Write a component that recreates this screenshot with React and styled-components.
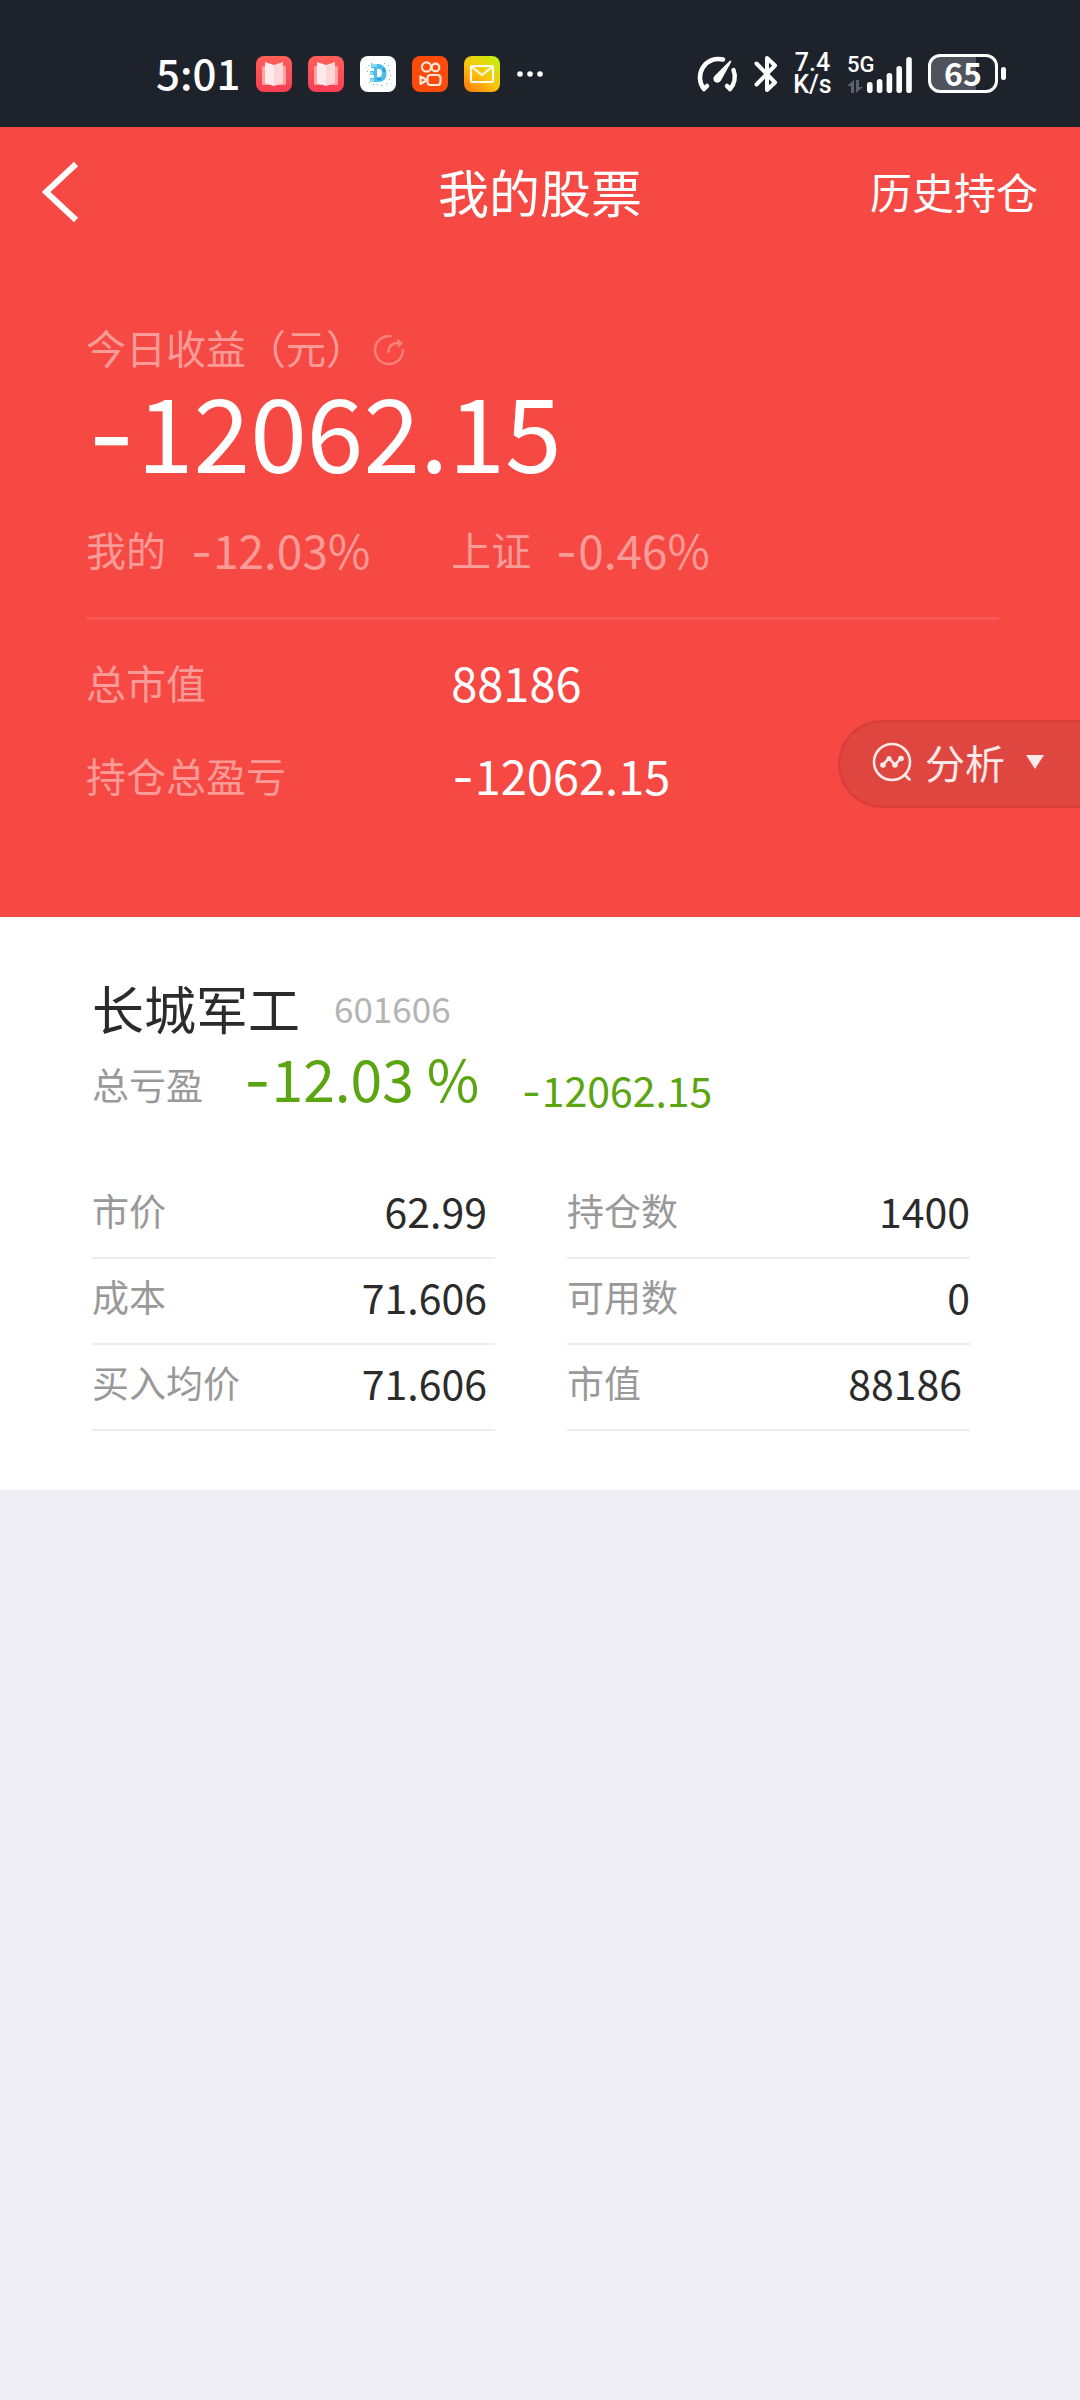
import React from "react";
import styled, { createGlobalStyle } from "styled-components";

const GlobalStyle = createGlobalStyle`
  *, *::before, *::after { box-sizing: border-box; }
  body {
    margin: 0;
    background: #efeef4;
    color: #2b2b2b;
    font-family: "Noto Sans CJK SC", "Noto Sans", sans-serif;
  }
  h1, h2, p, dl, dd { margin: 0; font-weight: 400; }
  svg { display: block; flex: none; }
`;

/* ---------- status bar ---------- */

const StatusBar = styled.header`
  display: flex;
  align-items: center;
  justify-content: space-between;
  height: 127px;
  padding: 20px 74px 0 156px;
  background: #1e222b;
  color: #fff;
`;

const StatusGroup = styled.div`
  display: flex;
  align-items: center;
  gap: ${(p) => p.$gap}px;
`;

const Clock = styled.time`
  padding-bottom: 4px;
  font-size: 42px;
  line-height: 48px;
  font-weight: 500;
`;

const NetSpeed = styled.div`
  display: flex;
  flex-direction: column;
  align-items: center;
  width: 37px;
  font-family: Roboto, sans-serif;
  font-size: 25px;
  line-height: 22px;
  font-weight: 500;
  white-space: nowrap;
`;

const Signal = styled.div`
  display: flex;
  align-items: flex-end;
`;

const SignalType = styled.div`
  display: flex;
  flex-direction: column;
  width: 20px;
  gap: 4px;
  font-family: Roboto, sans-serif;
  font-size: 22px;
  line-height: 22px;
  font-weight: 500;
`;

const Battery = styled.div`
  display: flex;
  align-items: center;
  gap: 3px;

  &::after {
    content: "";
    width: 5px;
    height: 13px;
    border-radius: 3px;
    background: #fff;
  }
`;

const BatteryBody = styled.div`
  width: 70px;
  height: 39px;
  border: 3px solid #fff;
  border-radius: 12px;
  background: linear-gradient(to right, #50535b 70%, transparent 70%);
  font-size: 32px;
  line-height: 30px;
  font-weight: 700;
  text-align: center;
`;

/* ---------- hero ---------- */

const Hero = styled.section`
  position: relative;
  background: #f64944;
  color: #fff;
`;

const Nav = styled.nav`
  display: grid;
  grid-template-columns: 1fr auto 1fr;
  align-items: center;
  height: 128px;
  padding: 0 42px;
`;

const BackButton = styled.button`
  justify-self: start;
  padding: 2px 0 0;
  border: 0;
  background: none;
  color: inherit;
  cursor: pointer;
`;

const Title = styled.h1`
  font-size: 51px;
  line-height: 64px;
`;

const NavLink = styled.a`
  justify-self: end;
  font-size: 42px;
  line-height: 60px;
  color: inherit;
  text-decoration: none;
`;

const Summary = styled.div`
  padding: 62px 81px 112px 86px;
`;

const SoftLabel = styled.span`
  font-size: 40px;
  line-height: 60px;
  color: #fb9b98;
`;

const TodayLabel = styled.div`
  display: flex;
  align-items: center;
  gap: 7px;
`;

const RefreshButton = styled.button`
  padding: 6px 0 0;
  border: 0;
  background: none;
  color: #fa807c;
  cursor: pointer;
`;

const TodayValue = styled.p`
  font-size: 102px;
  line-height: 104px;
`;

/* The short line-height keeps the sign from growing the line it sits on. */
const SignBox = styled.span`
  display: inline-block;
  width: 0.5em;
  font-family: Inter, sans-serif;
  line-height: 0.5;
  text-align: center;
`;

const RateRow = styled.div`
  display: grid;
  grid-template-columns: 40% 1fr;
  margin-top: 38px;
  padding-bottom: 38px;
  border-bottom: 3px solid #f85954;
`;

const Rate = styled.div`
  display: flex;
  align-items: center;
  gap: 24px;
`;

const RateValue = styled.span`
  font-size: 46px;
  line-height: 60px;
  color: #fb9b98;
`;

const TotalList = styled.dl`
  display: grid;
  grid-template-columns: 40% 1fr;
  align-items: center;
  row-gap: 33px;
  padding-top: 32px;
`;

const TotalTerm = styled.dt`
  font-size: 40px;
  line-height: 60px;
  color: #fb9b98;
`;

const TotalValue = styled.dd`
  font-size: 47px;
  line-height: 60px;
`;

/* Floating tab that hangs from the right edge of the hero. */
const AnalysisButton = styled.button`
  position: absolute;
  right: 0;
  bottom: 109px;
  display: flex;
  align-items: center;
  gap: 13px;
  height: 88px;
  padding: 0 36px 4px 32px;
  border: 2px solid #d93d39;
  border-right: 0;
  border-radius: 44px 0 0 44px;
  background: #de463f;
  color: #ffe9e8;
  font-family: inherit;
  font-size: 40px;
  line-height: 60px;
  cursor: pointer;
`;

const Caret = styled.span`
  width: 18px;
  height: 14px;
  margin-left: 8px;
  background: currentColor;
  clip-path: polygon(0 0, 100% 0, 50% 100%);
`;

/* ---------- holding card ---------- */

const Card = styled.section`
  padding: 59px 110px 59px 92px;
  background: #fff;
`;

const StockHeading = styled.div`
  display: flex;
  align-items: center;
  gap: 34px;
`;

const StockName = styled.h2`
  font-size: 52px;
  line-height: 64px;
`;

const StockCode = styled.span`
  font-size: 35px;
  line-height: 64px;
  color: #b4b4b4;
`;

const ProfitRow = styled.div`
  display: flex;
  align-items: flex-end;
`;

const ProfitLabel = styled.span`
  margin-right: 40px;
  font-size: 37px;
  line-height: 60px;
  color: #999;
`;

const ProfitRate = styled.span`
  margin-right: 42px;
  font-size: 57px;
  line-height: 74px;
  color: #5aa510;
`;

const ProfitAmount = styled.span`
  font-size: 41px;
  line-height: 50px;
  color: #5aa510;
`;

const Details = styled.dl`
  display: grid;
  grid-template-columns: 1fr 1fr;
  column-gap: 72px;
  margin-top: 59px;
`;

const DetailRow = styled.div`
  display: flex;
  align-items: center;
  justify-content: space-between;
  height: 86px;
  padding: 0 ${(p) => p.$inset}px 10px 0;
  border-bottom: 2px solid #ededed;
`;

const DetailTerm = styled.dt`
  font-size: 37px;
  line-height: 60px;
  color: #999;
`;

const DetailValue = styled.dd`
  font-size: 41px;
  line-height: 60px;
`;

/* ---------- icons ---------- */

function BookIcon({ id }) {
  return (
    <svg width="36" height="36" viewBox="0 0 36 36" aria-hidden="true">
      <defs>
        <linearGradient id={id} x1="0" y1="0" x2="0" y2="1">
          <stop offset="0" stopColor="#ff6059" />
          <stop offset="1" stopColor="#f83e55" />
        </linearGradient>
      </defs>
      <rect width="36" height="36" rx="8" fill={`url(#${id})`} />
      <rect x="6" y="10" width="24" height="19" rx="1.5" fill="#ffa3a3" />
      <path d="M9 6l9 3v21l-9-3z" fill="#ffe9ea" />
      <path d="M27 6l-9 3v21l9-3z" fill="#ffd6d8" />
    </svg>
  );
}

function PixelDIcon() {
  const dots = [
    [8, 9], [9, 26], [13, 28], [28, 9], [29, 14], [30, 19], [29, 23], [26, 27], [17, 28], [24, 7], [7, 15], [21, 29], [11, 7],
  ];
  return (
    <svg width="36" height="36" viewBox="0 0 36 36" aria-hidden="true">
      <rect width="36" height="36" rx="8" fill="#fff" />
      <path
        fillRule="evenodd"
        d="M11 8h8c5 1 7.500 5 7.500 9.500S24 26 19 26h-9v-4h4v-3h-4v-4h4v-3h-3zM17 13v8h2c2 0 3-2 3-4s-1-4-3-4z"
        fill="#4bbde9"
      />
      <path d="M11 8h6v3h-6zM10 16h3v3h-3zM10 23h4v3h-4z" fill="#8adaf4" />
      <path d="M23 12h2v4h-2zM17 22h4v2h-4z" fill="#269fd9" />
      {dots.map(([x, y]) => (
        <rect key={`${x}-${y}`} x={x} y={y} width="1" height="1" fill="#58b9e2" />
      ))}
    </svg>
  );
}

function CameraIcon() {
  return (
    <svg width="36" height="36" viewBox="0 0 36 36" aria-hidden="true">
      <rect width="36" height="36" rx="8" fill="#fc4b0a" />
      <g fill="none" stroke="#ffe6d8" strokeWidth="2.2" strokeLinejoin="round">
        <circle cx="14.5" cy="11" r="4.6" />
        <circle cx="23.5" cy="11.5" r="3.8" />
        <rect x="15.5" y="19" width="13" height="10" rx="3" />
        <path d="M15 24l-6.500-3.500v7.500z" />
      </g>
    </svg>
  );
}

function MailIcon() {
  return (
    <svg width="36" height="36" viewBox="0 0 36 36" aria-hidden="true">
      <defs>
        <linearGradient id="mail-bg" x1="0.1" y1="1" x2="0.9" y2="0">
          <stop offset="0" stopColor="#ff7a10" />
          <stop offset="0.45" stopColor="#fdc20a" />
          <stop offset="1" stopColor="#c4f214" />
        </linearGradient>
      </defs>
      <rect width="36" height="36" rx="8" fill="url(#mail-bg)" />
      <g fill="none" stroke="#fffbe8" strokeWidth="2.2" strokeLinejoin="round">
        <rect x="7" y="10" width="22" height="16" rx="1" />
        <path d="M8 11l10 8 10-8" />
      </g>
    </svg>
  );
}

function DotsIcon() {
  return (
    <svg width="28" height="36" viewBox="0 0 28 36" fill="#fff" aria-hidden="true">
      <circle cx="4" cy="18" r="2.8" />
      <circle cx="14" cy="18" r="2.8" />
      <circle cx="24" cy="18" r="2.8" />
    </svg>
  );
}

function GaugeIcon() {
  return (
    <svg width="42" height="38" viewBox="0 0 42 38" aria-hidden="true">
      <g fill="none" stroke="#fff" strokeWidth="4.500" strokeLinecap="round" strokeLinejoin="round">
        <path d="M27 4.500A18.500 18.500 0 0 0 8 34l3-3" />
        <path d="M37.500 15A18.500 18.500 0 0 1 34 34l-3-3" />
      </g>
      <path d="M35.500 6.500L25 25.500a4 4 0 1 1-6.500-4.500L34 5.500z" fill="#fff" />
    </svg>
  );
}

function BluetoothIcon() {
  return (
    <svg width="24" height="38" viewBox="0 0 24 38" aria-hidden="true">
      <path
        d="M2.500 8.500L21 27.500 13 35V3l8 7.500L2.500 29.500"
        fill="none"
        stroke="#fff"
        strokeWidth="4"
        strokeLinecap="round"
        strokeLinejoin="round"
      />
    </svg>
  );
}

function DataArrowsIcon() {
  return (
    <svg width="16" height="13" viewBox="0 0 16 13" fill="#5d6068" aria-hidden="true">
      <path d="M7 0v13H4V6H0zM9 13V0h3v7h4z" />
    </svg>
  );
}

function SignalBarsIcon() {
  const heights = [11, 14, 20, 27, 36];
  return (
    <svg width="45" height="36" viewBox="0 0 45 36" fill="#fff" aria-hidden="true">
      {heights.map((h, i) => (
        <rect key={h} x={i * 9.8} y={36 - h} width="5.6" height={h} rx="2.8" />
      ))}
    </svg>
  );
}

function ChevronLeftIcon() {
  return (
    <svg width="38" height="60" viewBox="0 0 38 60" aria-hidden="true">
      <path d="M34 2L4 30l30 28" fill="none" stroke="#fff" strokeWidth="6" />
    </svg>
  );
}

function RefreshIcon() {
  return (
    <svg width="32" height="32" viewBox="0 0 32 32" aria-hidden="true">
      <g fill="none" stroke="currentColor" strokeWidth="2.4" strokeLinecap="round">
        <path d="M18 2.200A14 14 0 1 0 30 16" />
        <path d="M15.500 18c0-6 3-9 10-9" />
      </g>
      <path d="M24 4.500l6 4.500-5 5z" fill="currentColor" />
    </svg>
  );
}

function AnalysisIcon() {
  return (
    <svg width="40" height="40" viewBox="0 0 40 40" aria-hidden="true">
      <g fill="none" stroke="currentColor" strokeWidth="2.600" strokeLinecap="round" strokeLinejoin="round">
        <circle cx="20" cy="20" r="18" />
        <path d="M33 33l4.500 4.500M11 23l6-7 6 7 6-7" />
      </g>
      <g fill="currentColor">
        <circle cx="11" cy="23" r="2.800" />
        <circle cx="17" cy="16.500" r="2.500" />
        <circle cx="23" cy="23" r="2.800" />
        <circle cx="29" cy="16.500" r="2.800" />
      </g>
    </svg>
  );
}

/* ---------- content ---------- */

function Amount({ value }) {
  if (!value.startsWith("-")) return value;
  return (
    <>
      <SignBox>-</SignBox>
      {value.slice(1)}
    </>
  );
}

const rates = [
  { label: "我的", value: "-12.03%" },
  { label: "上证", value: "-0.46%" },
];

const totals = [
  { label: "总市值", value: "88186" },
  { label: "持仓总盈亏", value: "-12062.15" },
];

const details = [
  { label: "市价", value: "62.99", inset: 8 },
  { label: "持仓数", value: "1400", inset: 0 },
  { label: "成本", value: "71.606", inset: 8 },
  { label: "可用数", value: "0", inset: 0 },
  { label: "买入均价", value: "71.606", inset: 8 },
  { label: "市值", value: "88186", inset: 8 },
];

export default function App() {
  return (
    <>
      <GlobalStyle />
      <StatusBar>
        <StatusGroup $gap={16}>
          <Clock>5:01</Clock>
          <BookIcon id="book-a" />
          <BookIcon id="book-b" />
          <PixelDIcon />
          <CameraIcon />
          <MailIcon />
          <DotsIcon />
        </StatusGroup>
        <StatusGroup $gap={16}>
          <GaugeIcon />
          <BluetoothIcon />
          <NetSpeed>
            <span>7.4</span>
            <span>K/s</span>
          </NetSpeed>
          <Signal>
            <SignalType>
              5G
              <DataArrowsIcon />
            </SignalType>
            <SignalBarsIcon />
          </Signal>
          <Battery>
            <BatteryBody>65</BatteryBody>
          </Battery>
        </StatusGroup>
      </StatusBar>

      <main>
        <Hero>
          <Nav>
            <BackButton type="button" aria-label="返回">
              <ChevronLeftIcon />
            </BackButton>
            <Title>我的股票</Title>
            <NavLink href="#history">历史持仓</NavLink>
          </Nav>

          <Summary>
            <TodayLabel>
              <SoftLabel>今日收益（元）</SoftLabel>
              <RefreshButton type="button" aria-label="刷新">
                <RefreshIcon />
              </RefreshButton>
            </TodayLabel>
            <TodayValue>
              <Amount value="-12062.15" />
            </TodayValue>
            <RateRow>
              {rates.map((r) => (
                <Rate key={r.label}>
                  <SoftLabel>{r.label}</SoftLabel>
                  <RateValue>
                    <Amount value={r.value} />
                  </RateValue>
                </Rate>
              ))}
            </RateRow>
            <TotalList>
              {totals.map((t) => (
                <React.Fragment key={t.label}>
                  <TotalTerm>{t.label}</TotalTerm>
                  <TotalValue>
                    <Amount value={t.value} />
                  </TotalValue>
                </React.Fragment>
              ))}
            </TotalList>
          </Summary>

          <AnalysisButton type="button">
            <AnalysisIcon />
            分析
            <Caret />
          </AnalysisButton>
        </Hero>

        <Card>
          <StockHeading>
            <StockName>长城军工</StockName>
            <StockCode>601606</StockCode>
          </StockHeading>
          <ProfitRow>
            <ProfitLabel>总亏盈</ProfitLabel>
            <ProfitRate>
              <Amount value="-12.03 %" />
            </ProfitRate>
            <ProfitAmount>
              <Amount value="-12062.15" />
            </ProfitAmount>
          </ProfitRow>
          <Details>
            {details.map((d) => (
              <DetailRow key={d.label} $inset={d.inset}>
                <DetailTerm>{d.label}</DetailTerm>
                <DetailValue>{d.value}</DetailValue>
              </DetailRow>
            ))}
          </Details>
        </Card>
      </main>
    </>
  );
}
